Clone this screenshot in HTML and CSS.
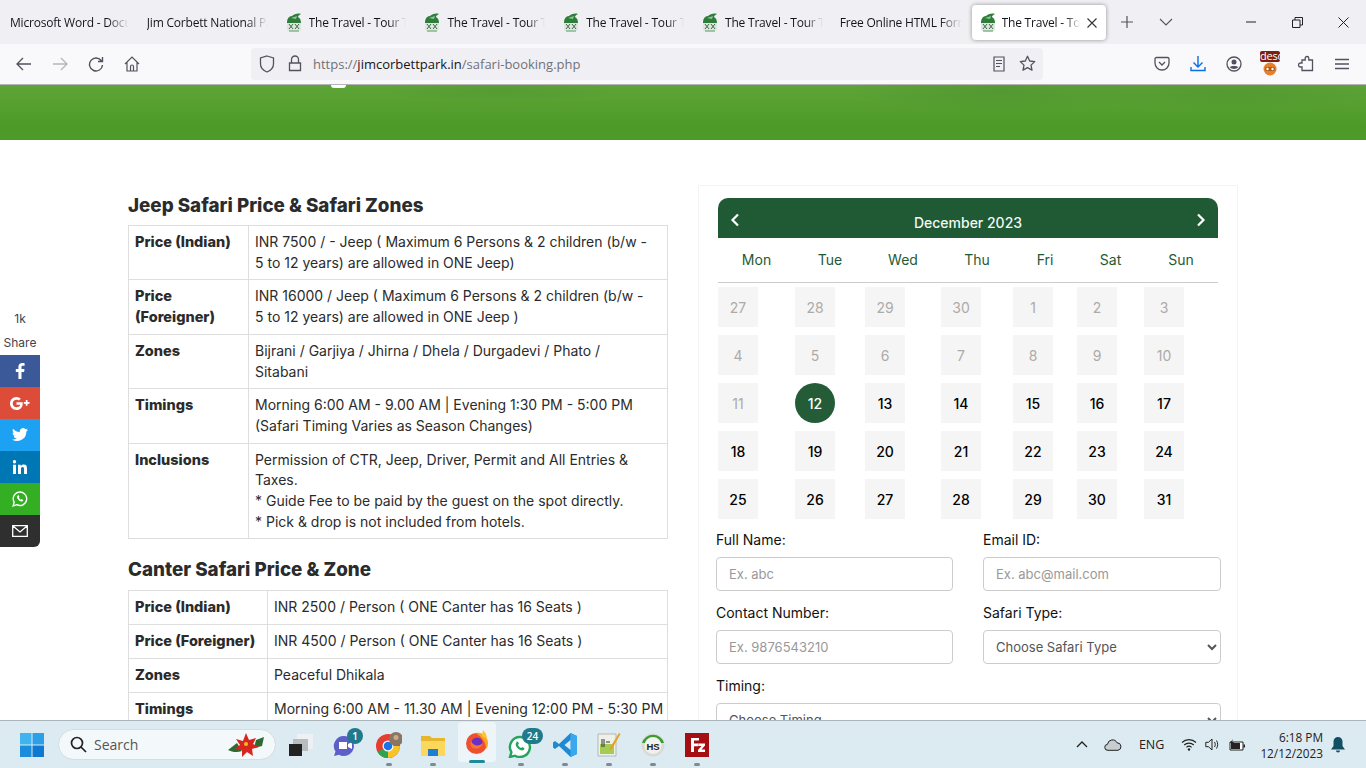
FILE: index.html
```html
<!DOCTYPE html>
<html lang="en">
<head>
<meta charset="utf-8">
<title>Safari Booking</title>
<link rel="stylesheet" href="styles.css">
</head>
<body>
<svg class="defs" width="0" height="0" aria-hidden="true">
  <symbol id="fav" viewBox="0 0 16 20">
    <path d="M1 10c0-3 1-7 5-7 2-2 6-3 9-2-2 1-3 2-3 3 2 1 3 3 3 6z" fill="#2f7d3a"/>
    <path d="M5 5l6-2-1 3z" fill="#8fc79a"/>
    <path d="M1 10h14v7c-2 2-12 2-14 0z" fill="#dfe4df"/>
    <path d="M3 11l4 5M7 11l-4 5M9 11l4 5M13 11l-4 5" stroke="#3c6a46" stroke-width="1" fill="none"/>
    <path d="M3 18h10" stroke="#7fb58a" stroke-width="1.4"/>
  </symbol>
</svg>

<header class="tabstrip">
  <div class="tab"><span class="tab-title">Microsoft Word - Document</span></div>
  <div class="tab"><span class="tab-title">Jim Corbett National Park</span></div>
  <div class="tab"><svg class="fav"><use href="#fav"/></svg><span class="tab-title">The Travel - Tour Travel</span></div>
  <div class="tab"><svg class="fav"><use href="#fav"/></svg><span class="tab-title">The Travel - Tour Travel</span></div>
  <div class="tab"><svg class="fav"><use href="#fav"/></svg><span class="tab-title">The Travel - Tour Travel</span></div>
  <div class="tab"><svg class="fav"><use href="#fav"/></svg><span class="tab-title">The Travel - Tour Travel</span></div>
  <div class="tab tab-plain"><span class="tab-title">Free Online HTML Form</span></div>
  <div class="tab tab-active"><svg class="fav"><use href="#fav"/></svg><span class="tab-title">The Travel - Tour Travel</span>
    <svg class="ic-close" width="12" height="12" viewBox="0 0 12 12"><path d="M1.500 1.500l9 9M10.500 1.500l-9 9" stroke="#333" stroke-width="1.100" fill="none"/></svg>
  </div>
  <button class="strip-btn strip-new"><svg width="14" height="14" viewBox="0 0 14 14"><path d="M7 1v12M1 7h12" stroke="#555" stroke-width="1.200"/></svg></button>
  <button class="strip-btn"><svg width="14" height="8" viewBox="0 0 14 8"><path d="M1 1l6 6 6-6" stroke="#555" stroke-width="1.100" fill="none"/></svg></button>
  <div class="winctl">
    <button class="win-btn"><svg width="10" height="2" viewBox="0 0 10 2"><path d="M0 1h10" stroke="#222"/></svg></button>
    <button class="win-btn"><svg width="11" height="11" viewBox="0 0 11 11"><path d="M.5 3h7.500v7.500H.5zM3 3V.5h7.500V8H8" stroke="#222" fill="none"/></svg></button>
    <button class="win-btn"><svg width="11" height="11" viewBox="0 0 11 11"><path d="M.5.500l10 10M10.500.500l-10 10" stroke="#222" fill="none"/></svg></button>
  </div>
</header>

<nav class="toolbar">
  <button class="tool"><svg width="16" height="14" viewBox="0 0 16 14"><path d="M7 1L1 7l6 6M1 7h14" stroke="#52525e" stroke-width="1.300" fill="none"/></svg></button>
  <button class="tool"><svg width="16" height="14" viewBox="0 0 16 14"><path d="M9 1l6 6-6 6M15 7H1" stroke="#b4b4ba" stroke-width="1.300" fill="none"/></svg></button>
  <button class="tool"><svg width="16" height="16" viewBox="0 0 16 16"><path d="M13.500 5A6.500 6.500 0 1 0 14.500 9M14.500 1v4.500H10" stroke="#52525e" stroke-width="1.400" fill="none"/></svg></button>
  <button class="tool"><svg width="16" height="16" viewBox="0 0 16 16"><path d="M1 8l7-7 7 7M3 6.500V15h10V6.500M6.500 15v-4.500a1.500 1.500 0 0 1 3 0V15" stroke="#52525e" stroke-width="1.200" fill="none"/></svg></button>
  <div class="urlbar">
    <svg class="url-shield" width="16" height="18" viewBox="0 0 16 18"><path d="M8 1l6.500 2v6c0 4-3 6.500-6.500 8-3.500-1.500-6.500-4-6.500-8V3z" stroke="#52525e" stroke-width="1.300" fill="none"/></svg>
    <svg class="url-lock" width="14" height="17" viewBox="0 0 14 17"><path d="M1.500 8h11v7.500h-11zM3.500 8V4.500a3.500 3.500 0 0 1 7 0V8" stroke="#52525e" stroke-width="1.300" fill="none"/></svg>
    <span class="url-text">https://<b>jimcorbettpark.in</b>/safari-booking.php</span>
    <svg class="url-reader" width="12" height="16" viewBox="0 0 12 16"><path d="M1 1h10v14H1zM3 4.500h6M3 7.500h6M3 10.500h4" stroke="#52525e" stroke-width="1.200" fill="none"/></svg>
    <svg class="url-star" width="17" height="17" viewBox="0 0 17 17"><path d="M8.500 1.300l2.200 4.700 5 .6-3.700 3.500 1 5-4.500-2.500-4.500 2.500 1-5L1.300 6.600l5-.6z" stroke="#52525e" stroke-width="1.300" fill="none" stroke-linejoin="round"/></svg>
  </div>
  <button class="tool tool-first"><svg width="16" height="16" viewBox="0 0 16 16"><path d="M1 3a1.500 1.500 0 0 1 1.500-1.500h11A1.500 1.500 0 0 1 15 3v4a7 7 0 0 1-14 0z" stroke="#52525e" stroke-width="1.300" fill="none"/><path d="M5 6l3 3 3-3" stroke="#52525e" stroke-width="1.300" fill="none"/></svg></button>
  <button class="tool"><svg width="16" height="17" viewBox="0 0 16 17"><path d="M8 1v11M3.500 7.500L8 12l4.500-4.500M1 12v3.500h14V12" stroke="#0a6ee6" stroke-width="1.400" fill="none"/></svg></button>
  <button class="tool"><svg width="16" height="16" viewBox="0 0 16 16"><circle cx="8" cy="8" r="7" stroke="#52525e" stroke-width="1.300" fill="none"/><circle cx="8" cy="6" r="2.500" fill="#52525e"/><path d="M3.500 11c2-1.500 7-1.500 9 0-2 2.500-7 2.500-9 0z" fill="#52525e"/></svg></button>
  <button class="tool tool-ext">
    <svg width="20" height="24" viewBox="0 0 20 24"><circle cx="10" cy="17" r="6.500" fill="#e8802a"/><rect x="5" y="15" width="10" height="4" rx="2" fill="#a85c1e"/><circle cx="7.500" cy="17" r="1.200" fill="#fff"/><circle cx="12.500" cy="17" r="1.200" fill="#fff"/></svg>
    <span class="ext-badge">deso</span>
  </button>
  <button class="tool"><svg width="16" height="17" viewBox="0 0 16 17"><path d="M9 1.500a1.800 1.800 0 0 1 1.800 1.800V5H14.500v10.500H4V12H2.500a2 2 0 0 1 0-4H4V5h3.200V3.300A1.800 1.800 0 0 1 9 1.500z" stroke="#52525e" stroke-width="1.300" fill="none"/></svg></button>
  <button class="tool"><svg width="14" height="12" viewBox="0 0 14 12"><path d="M0 1.500h14M0 6h14M0 10.500h14" stroke="#52525e" stroke-width="1.300"/></svg></button>
</nav>

<main class="page">
  <div class="banner"><span class="descender"></span></div>
  <div class="columns">
    <section class="prices">
      <h2 class="price-title">Jeep Safari Price &amp; Safari Zones</h2>
      <table class="price-table jeep">
        <tr><th>Price (Indian)</th><td>INR 7500 / - Jeep ( Maximum 6 Persons &amp; 2 children (b/w -<br>5 to 12 years) are allowed in ONE Jeep)</td></tr>
        <tr><th>Price (Foreigner)</th><td>INR 16000 / Jeep ( Maximum 6 Persons &amp; 2 children (b/w -<br>5 to 12 years) are allowed in ONE Jeep )</td></tr>
        <tr><th>Zones</th><td>Bijrani / Garjiya / Jhirna / Dhela / Durgadevi / Phato /<br>Sitabani</td></tr>
        <tr><th>Timings</th><td>Morning 6:00 AM - 9.00 AM | Evening 1:30 PM - 5:00 PM<br>(Safari Timing Varies as Season Changes)</td></tr>
        <tr><th>Inclusions</th><td>Permission of CTR, Jeep, Driver, Permit and All Entries &amp;<br>Taxes.<br>* Guide Fee to be paid by the guest on the spot directly.<br>* Pick &amp; drop is not included from hotels.</td></tr>
      </table>
      <h2 class="price-title second">Canter Safari Price &amp; Zone</h2>
      <table class="price-table canter">
        <tr><th>Price (Indian)</th><td>INR 2500 / Person ( ONE Canter has 16 Seats )</td></tr>
        <tr><th>Price (Foreigner)</th><td>INR 4500 / Person ( ONE Canter has 16 Seats )</td></tr>
        <tr><th>Zones</th><td>Peaceful Dhikala</td></tr>
        <tr><th>Timings</th><td>Morning 6:00 AM - 11.30 AM | Evening 12:00 PM - 5:30 PM</td></tr>
      </table>
    </section>

    <section class="booking">
      <div class="cal-head">
        <svg class="cal-arrow" width="10" height="14" viewBox="0 0 10 14"><path d="M8 1.500L2.500 7 8 12.500" stroke="#fff" stroke-width="2.200" fill="none"/></svg>
        <span class="cal-month">December 2023</span>
        <svg class="cal-arrow" width="10" height="14" viewBox="0 0 10 14"><path d="M2 1.500L7.500 7 2 12.500" stroke="#fff" stroke-width="2.200" fill="none"/></svg>
      </div>
      <div class="cal-grid cal-days">
        <span>Mon</span><span>Tue</span><span>Wed</span><span>Thu</span><span>Fri</span><span>Sat</span><span>Sun</span>
      </div>
      <div class="cal-grid cal-dates">
        <span class="off">27</span><span class="off">28</span><span class="off">29</span><span class="off">30</span><span class="off">1</span><span class="off">2</span><span class="off">3</span>
        <span class="off">4</span><span class="off">5</span><span class="off">6</span><span class="off">7</span><span class="off">8</span><span class="off">9</span><span class="off">10</span>
        <span class="off">11</span><span class="today">12</span><span>13</span><span>14</span><span>15</span><span>16</span><span>17</span>
        <span>18</span><span>19</span><span>20</span><span>21</span><span>22</span><span>23</span><span>24</span>
        <span>25</span><span>26</span><span>27</span><span>28</span><span>29</span><span>30</span><span>31</span>
      </div>
      <form class="form">
        <label class="field"><span>Full Name:</span><input type="text" placeholder="Ex. abc"></label>
        <label class="field"><span>Email ID:</span><input type="text" placeholder="Ex. abc@mail.com"></label>
        <label class="field"><span>Contact Number:</span><input type="text" placeholder="Ex. 9876543210"></label>
        <label class="field"><span>Safari Type:</span><select><option>Choose Safari Type</option></select></label>
        <label class="field field-wide"><span>Timing:</span><select><option>Choose Timing</option></select></label>
      </form>
    </section>
  </div>

  <aside class="share">
    <div class="share-count">1k</div>
    <div class="share-label">Share</div>
    <a class="sbtn fb"><svg width="10" height="16" viewBox="0 0 10 16"><path d="M6.500 16V9h2.600l.4-3H6.500V4.200c0-.9.300-1.400 1.500-1.400h1.600V.2C9.300.1 8.400 0 7.300 0 5 0 3.400 1.400 3.400 3.900V6H.8v3h2.600v7z" fill="#fff"/></svg></a>
    <a class="sbtn gp"><svg width="21" height="13" viewBox="0 0 21 13"><path d="M6.500 5.300v2.400h3.700C10 9 8.800 10.300 6.500 10.300 4.400 10.300 2.700 8.600 2.700 6.500S4.400 2.700 6.500 2.700c1.200 0 2 .5 2.400.9l1.900-1.800C9.600.7 8.200 0 6.500 0 2.900 0 0 2.900 0 6.500S2.900 13 6.500 13c3.800 0 6.200-2.600 6.200-6.300 0-.5 0-.9-.1-1.400z" fill="#fff"/><path d="M17.500 5V3h-1.700v2h-2v1.700h2v2h1.700v-2h2V5z" fill="#fff"/></svg></a>
    <a class="sbtn tw"><svg width="16" height="14" viewBox="0 0 16 14"><path d="M16 1.700c-.6.300-1.200.4-1.900.5.700-.4 1.200-1 1.400-1.800-.6.400-1.300.6-2.100.8A3.300 3.300 0 0 0 7.800 4.200C5.100 4.100 2.700 2.800 1.100.800.200 2.300.700 4.200 2.100 5.200c-.5 0-1-.2-1.500-.4 0 1.600 1.100 3 2.600 3.300-.5.100-1 .2-1.500.1.400 1.300 1.600 2.200 3.100 2.300A6.600 6.600 0 0 1 0 11.400 9.300 9.300 0 0 0 14.400 3.500c.6-.5 1.200-1.100 1.600-1.800z" fill="#fff"/></svg></a>
    <a class="sbtn li"><svg width="14" height="14" viewBox="0 0 14 14"><path d="M0 4.700h3V14H0zM1.500 0a1.700 1.700 0 1 1 0 3.400 1.700 1.700 0 0 1 0-3.400zM5 4.700h2.800V6c.5-.9 1.500-1.500 3-1.500 2.500 0 3.200 1.600 3.200 4V14h-3V9c0-1.300-.3-2-1.400-2-1.200 0-1.600.9-1.600 2v5H5z" fill="#fff"/></svg></a>
    <a class="sbtn wa"><svg width="16" height="16" viewBox="0 0 14 14"><path d="M1 13l.9-3.200A5.900 5.900 0 1 1 4.200 12z" stroke="#fff" stroke-width="1.200" fill="none"/><path d="M5 3.900c-1 .6-.9 2 .3 3.400 1.300 1.600 2.800 2.400 3.900 1.700.6-.4.700-.9.500-1.200l-1.300-.7-.6.600C7.200 7.400 6.400 6.600 6 5.700l.5-.7-.6-1.200c-.3-.1-.6-.1-.9.100z" fill="#fff"/></svg></a>
    <a class="sbtn em"><svg width="16" height="12" viewBox="0 0 16 12"><path d="M.7.700h14.600v10.600H.7zM1 1l7 6 7-6" stroke="#fff" stroke-width="1.300" fill="none"/></svg></a>
  </aside>
</main>

<footer class="taskbar">
  <button class="start"><svg width="24" height="24" viewBox="0 0 24 24"><path d="M0 0h11.500v11.500H0z" fill="#3fb4ee"/><path d="M12.500 0H24v11.500H12.500z" fill="#2ba0e8"/><path d="M0 12.500h11.500V24H0z" fill="#1b8ddc"/><path d="M12.500 12.500H24V24H12.500z" fill="#0f78d0"/></svg></button>
  <div class="search">
    <svg width="17" height="17" viewBox="0 0 17 17"><circle cx="7" cy="7" r="5.500" stroke="#222" stroke-width="1.700" fill="none"/><path d="M11 11l5 5" stroke="#222" stroke-width="1.700"/></svg>
    <span>Search</span>
    <svg class="poinsettia" width="36" height="26" viewBox="0 0 36 26"><path d="M0 18l9-7 5 8c-5 2-10 1-14-1zM36 5l-2 9-8 2 2-8z" fill="#2e6b34"/><path d="M18 1l3 7 7-2-3 6 6 3-7 2 1 7-6-4-5 5v-7l-7-1 5-4-4-6 7 2z" fill="#d8261f"/><circle cx="18" cy="12" r="2" fill="#f2c01e"/></svg>
  </div>
  <div class="apps">
    <div class="app"><svg width="24" height="22" viewBox="0 0 24 22"><path d="M8 0h16v15H8z" fill="#eef1f3"/><path d="M4 5h15v12H4z" fill="#b8bcbf"/><path d="M0 10h13v12H0z" fill="#222"/></svg></div>
    <div class="app"><svg width="26" height="24" viewBox="0 0 26 24"><path d="M12 3a10 10 0 1 1-5 18.700L2 23l1.500-4.500A10 10 0 0 1 12 3z" fill="#5b5fc7"/><path d="M7 9h8v7H7zM16 11l4-2v7l-4-2z" fill="#fff"/></svg><span class="badge">1</span></div>
    <div class="app app-on"><svg width="26" height="26" viewBox="0 0 26 26"><circle cx="12" cy="14" r="12" fill="#e53e30"/><path d="M12 14L1.600 20A12 12 0 0 0 12 26c2 0 3-.3 4-1z" fill="#2ea44f"/><path d="M12 14l12 0a12 12 0 0 1-12 12z" fill="#f7c325"/><circle cx="12" cy="14" r="5.500" fill="#fff"/><circle cx="12" cy="14" r="4.300" fill="#1a73e8"/><circle cx="20" cy="7" r="7" fill="#8a7462"/><circle cx="20" cy="5.500" r="2.500" fill="#c9a98c"/></svg></div>
    <div class="app app-on"><svg width="24" height="22" viewBox="0 0 24 22"><path d="M0 2h9l2 2h13v18H0z" fill="#e8b62c"/><path d="M0 7h24v15H0z" fill="#fbd75b"/><path d="M7 15h10v7H7z" fill="#1d7fd1"/></svg></div>
    <div class="app app-active"><svg width="24" height="24" viewBox="0 0 24 24"><circle cx="11.500" cy="13.500" r="10.500" fill="#f0502e"/><path d="M11 3c6-1 12 3 12 10 0 3-1 5-2 6 0-6-3-11-10-16z" fill="#fca326"/><path d="M18 0c3 3 4 6 4 9l-5-3z" fill="#fbc52f"/><circle cx="12" cy="13" r="5.500" fill="#6b2fc6"/><path d="M6 11c2 5 8 6 12 2-1 5-6 7-10 5-2-1-3-4-2-7z" fill="#f7772a"/></svg></div>
    <div class="app app-on"><svg width="26" height="26" viewBox="0 0 26 26"><path d="M12 5a10 10 0 1 1-5 18.700L2 25l1.400-4.800A10 10 0 0 1 12 5z" stroke="#24a55f" stroke-width="2.400" fill="#fff"/><path d="M8.500 10.500c-1.500 1-1 3.500 1 5.500 2 2.200 4.500 3 6 2 1-.7 1-1.500.7-2l-2-1-1 1c-1.500-.6-2.700-1.800-3.200-3.200l1-1-1-2c-.5-.3-1.500-.2-1.500-.3z" fill="#24a55f"/></svg><span class="badge badge-wide">24</span></div>
    <div class="app app-on"><svg width="24" height="24" viewBox="0 0 24 24"><path d="M17.500 0L24 3v18l-6.500 3L6 13l-4 3-2-1.500V9.500L2 8l4 3z" fill="#1f8ad2"/><path d="M17.500 0L24 3v18l-6.500 3z" fill="#3aa7ee"/><path d="M17.500 7l-6 5 6 5z" fill="#dbe9f0"/></svg></div>
    <div class="app app-on"><svg width="24" height="26" viewBox="0 0 24 26"><path d="M1 2h18v22H1z" fill="#eef1e8" stroke="#aaa" stroke-width=".8"/><path d="M3 12h14v10H3z" fill="#a4cc55"/><path d="M5 7v8M7 7v8M9 10h4" stroke="#333" stroke-width="1"/><path d="M22 1l1.500 1L15 17l-2.500 1.500L13 15.500z" fill="#e8a21d"/></svg></div>
    <div class="app app-on"><svg width="24" height="24" viewBox="0 0 24 24"><circle cx="12" cy="12" r="11.500" fill="#d9dcd6"/><path d="M1 10a11.500 11.500 0 0 1 22 0z" fill="#3e9a34"/><circle cx="12" cy="12.500" r="8.500" fill="#f2f2ec"/><text class="hs" x="12" y="16.500" text-anchor="middle">HS</text></svg></div>
    <div class="app app-on"><svg width="24" height="24" viewBox="0 0 24 24"><path d="M0 0h24v24H0z" fill="#a50e12"/><path d="M6 5h8v2.600H9v3h4.500v2.600H9V19H6z" fill="#fff"/><path d="M13.500 10.500H20v2l-3.500 4H20V19h-7v-2l3.500-4h-3z" fill="#fff"/></svg></div>
  </div>
  <div class="tray">
    <svg class="tray-chev" width="12" height="7" viewBox="0 0 12 7"><path d="M1 6l5-5 5 5" stroke="#222" stroke-width="1.300" fill="none"/></svg>
    <svg class="tray-cloud" width="18" height="12" viewBox="0 0 18 12"><path d="M4 11.300a3 3 0 0 1-.5-6A5 5 0 0 1 13 3.800a3.800 3.800 0 0 1 1 7.500z" fill="#c7cdd1" stroke="#222"/></svg>
    <span class="tray-lang">ENG</span>
    <svg class="tray-wifi" width="16" height="13" viewBox="0 0 16 13"><path d="M1 4.500a10 10 0 0 1 14 0M3.200 7a7 7 0 0 1 9.600 0M5.400 9.300a4 4 0 0 1 5.200 0" stroke="#222" stroke-width="1.100" fill="none"/><circle cx="8" cy="11.500" r="1.200" fill="#222"/></svg>
    <svg class="tray-vol" width="16" height="13" viewBox="0 0 16 13"><path d="M.8 4.300h2.700L7 1v11L3.500 8.700H.8z" stroke="#222" fill="none"/><path d="M9.500 4c1 1.500 1 3.500 0 5M11.500 2.500c1.600 2.500 1.600 5.500 0 8" stroke="#222" fill="none"/></svg>
    <svg class="tray-bat" width="16" height="12" viewBox="0 0 16 12"><path d="M1 3h13v8H1z" fill="#fff" stroke="#222"/><path d="M2 4h9v6H2z" fill="#222"/><path d="M14.500 5.500H16v3h-1.500z" fill="#222"/><path d="M4 0L1 4h2L2 7l3-4H3z" fill="#222"/></svg>
    <div class="clock"><div>6:18 PM</div><div>12/12/2023</div></div>
    <svg class="tray-bell" width="14" height="16" viewBox="0 0 14 16"><path d="M7 0a4.500 4.500 0 0 1 4.500 4.500V9L14 12.500H0L2.500 9V4.500A4.500 4.500 0 0 1 7 0zM5 13.500h4a2 2 0 0 1-4 0z" fill="#134f63"/></svg>
  </div>
</footer>
</body>
</html>
```

FILE: styles.css
```css
* { box-sizing: border-box; }
html, body { margin: 0; height: 100%; }
body {
  width: 1366px;
  height: 768px;
  overflow: hidden;
  display: flex;
  flex-direction: column;
  font-family: Inter, "Liberation Sans", sans-serif;
  color: #2b2b2b;
  background: #fff;
}
button { border: 0; background: none; padding: 0; font: inherit; }
.defs { position: absolute; }

/* browser tabs */
.tabstrip {
  flex: 0 0 44px;
  display: flex;
  background: #f0f0f4;
  font: 12px "Open Sans", sans-serif;
  letter-spacing: -.2px;
  color: #15141a;
}
.tab {
  flex: 0 0 138.8px;
  min-width: 0;
  height: 35px;
  margin-top: 5px;
  padding: 0 10px 0 8px;
  display: flex;
  align-items: center;
  gap: 7px;
}
.tab:first-child { padding-left: 10px; }
.tab-plain { padding-left: 7px; }
.tab-title {
  flex: 1;
  min-width: 0;
  white-space: nowrap;
  overflow: hidden;
  -webkit-mask-image: linear-gradient(90deg, #000 82%, transparent);
  mask-image: linear-gradient(90deg, #000 82%, transparent);
}
.fav { width: 16px; height: 20px; flex: none; }
.tab-active {
  flex: 0 0 134px;
  padding-right: 8px;
  background: #fff;
  border-radius: 4px;
  box-shadow: 0 0 4px rgba(0, 0, 0, .4);
  gap: 6px;
}
.ic-close { flex: none; }
.strip-btn { flex: 0 0 39px; height: 44px; display: flex; align-items: center; justify-content: center; }
.strip-new { margin-left: 2px; }
.winctl { margin-left: auto; display: flex; }
.win-btn { width: 46px; height: 44px; display: flex; align-items: center; justify-content: center; }

/* browser toolbar */
.toolbar {
  flex: 0 0 41px;
  display: flex;
  align-items: center;
  padding: 0 6px 1px;
  background: #f9f9fb;
  border-bottom: 1px solid #b4b4b8;
}
.tool { flex: 0 0 36px; height: 32px; display: flex; align-items: center; justify-content: center; position: relative; }
.tool-first { margin-left: 101px; }
.ext-badge {
  position: absolute;
  top: 3px;
  left: 8px;
  width: 20px;
  height: 11px;
  overflow: hidden;
  background: #7c1f10;
  border-radius: 2px;
  color: #fff;
  font: 11px/10px "Open Sans", sans-serif;
  letter-spacing: -.2px;
  text-align: left;
}
.urlbar {
  flex: 0 0 792px;
  height: 32px;
  margin-left: 101px;
  display: flex;
  align-items: center;
  background: #f0f0f4;
  border-radius: 4px;
  padding-left: 8px;
  font: 13px "Open Sans", sans-serif;
  color: #70707a;
}
.url-lock { margin-left: 13px; }
.url-text { margin-left: 11px; flex: 1; }
.url-text b { font-weight: 400; color: #15141a; }
.url-star { margin-left: 14px; margin-right: 7px; }

/* page */
.page { flex: 1; min-height: 0; position: relative; overflow: hidden; }
.banner {
  height: 55px;
  position: relative;
  background:
    radial-gradient(ellipse 150px 22px at 1000px 6px, rgba(40, 90, 30, .14), transparent),
    radial-gradient(ellipse 170px 20px at 1230px 6px, rgba(40, 90, 30, .12), transparent),
    radial-gradient(ellipse 120px 10px at 500px 6px, rgba(40, 90, 30, .1), transparent),
    linear-gradient(180deg, #5ea438 0%, #56a030 35%, #4d9a29 75%);
}
.descender {
  position: absolute;
  left: 331px;
  top: 0;
  width: 15px;
  height: 3px;
  background: #fff;
  border-radius: 0 0 8px 8px;
}
.columns {
  display: grid;
  grid-template-columns: 540px 540px;
  column-gap: 30px;
  padding-left: 128px;
  padding-top: 45px;
}
.prices { padding-top: 9px; }
.price-title { margin: 0 0 7px; font-size: 18.800px; line-height: 24px; font-weight: 800; color: #2b2b2b; }
.price-title.second { margin-top: 19px; margin-bottom: 8px; }
.price-table {
  width: 540px;
  border-collapse: collapse;
  table-layout: fixed;
  font-size: 14px;
  line-height: 20.700px;
}
.price-table th, .price-table td {
  border: 1px solid #dedede;
  padding: 6px;
  text-align: left;
  vertical-align: top;
  font-weight: 400;
  white-space: nowrap;
}
.price-table th { font-size: 14.500px; font-weight: 800; white-space: normal; }
.jeep th { width: 120px; }
.canter th { width: 139px; white-space: nowrap; }

/* calendar card */
.booking {
  height: 700px;
  border: 1px solid #f4f4f4;
  padding: 12px 20px 0 19px;
}
.cal-head {
  width: 500px;
  height: 40px;
  padding: 0 12px;
  display: flex;
  justify-content: space-between;
  background: #1f5a34;
  border-radius: 10px 10px 0 0;
}
.cal-arrow { margin-top: 15px; }
.cal-month { margin-top: 16px; color: #f1f8f3; font-size: 14px; line-height: 18px; font-weight: 500; }
.cal-grid {
  width: 500px;
  display: grid;
  grid-template-columns: 77px 70px 76px 72px 64px 67px 74px;
}
.cal-days {
  height: 45px;
  align-items: center;
  border-bottom: 1px solid #ccc;
  padding-bottom: 2px;
  text-align: center;
  font-size: 14px;
  color: #1f5a34;
}
.cal-dates { row-gap: 8px; padding-top: 4px; }
.cal-dates span {
  width: 40px;
  height: 40px;
  display: flex;
  align-items: center;
  justify-content: center;
  background: #f5f5f5;
  font-size: 14px;
  font-weight: 500;
  color: #000;
}
.cal-dates .off { color: #aeaaa8; font-weight: 400; }
.cal-dates .today { background: #245c37; border-radius: 50%; color: #fff; }

/* form */
.form {
  margin: 12px 0 0 -2px;
  width: 505px;
  display: grid;
  grid-template-columns: 237px 238px;
  column-gap: 30px;
  row-gap: 13px;
}
.field { display: block; font-size: 14px; line-height: 18px; color: #111; }
.field span { display: block; margin-bottom: 8px; }
.field-wide { grid-column: 1 / -1; }
.field input, .field select {
  display: block;
  width: 100%;
  height: 34px;
  border: 1px solid #ccc;
  border-radius: 4px;
  background: #fff;
  padding: 0 12px;
  font: 13px Inter, sans-serif;
  color: #555;
}
.field select { padding: 0 8px; }
.field input::placeholder { color: #999; opacity: 1; }

/* share bar */
.share { position: absolute; left: 0; top: 226px; width: 40px; text-align: center; }
.share-count { font-size: 12px; line-height: 16px; color: #2b4a5a; }
.share-label { margin-top: 8px; font-size: 12px; line-height: 16px; color: #444; margin-bottom: 4px; }
.sbtn { display: flex; width: 40px; height: 32px; align-items: center; justify-content: center; }
.fb { background: #3b5998; }
.gp { background: #dd4b39; }
.tw { background: #1da1f2; }
.li { background: #0077b5; }
.wa { background: #34af23; }
.em { background: #2f2f2f; border-radius: 0 0 6px 0; }

/* taskbar */
.taskbar {
  flex: 0 0 48px;
  display: flex;
  align-items: center;
  padding-left: 10px;
  border-top: 1px solid #a9b5bb;
  background: #dcebf2;
  font-family: "Open Sans", sans-serif;
}
.start { flex: 0 0 44px; height: 40px; display: flex; align-items: center; justify-content: center; }
.search {
  flex: 0 0 218px;
  height: 31px;
  margin-left: 4px;
  padding-left: 11px;
  display: flex;
  align-items: center;
  gap: 7px;
  background: #f3f8fa;
  border: 1px solid #d5dde1;
  border-radius: 16px;
  font-size: 14px;
  color: #555;
}
.poinsettia { margin-left: auto; margin-right: 11px; }
.apps { margin-left: 3px; display: flex; }
.app { flex: 0 0 44px; height: 46px; display: flex; align-items: center; justify-content: center; position: relative; }
.app-on::after, .app-active::after {
  content: "";
  position: absolute;
  bottom: 2px;
  left: 19px;
  width: 6px;
  height: 3px;
  border-radius: 2px;
  background: #808a90;
}
.app-active { width: 38px; flex-basis: 38px; margin: 0 3px; height: 40px; background: #eef5f8; border-radius: 4px; }
.app-active::after { left: 11px; bottom: -1px; width: 16px; background: #1f8a9a; }
.badge {
  position: absolute;
  top: 6px;
  left: 24px;
  width: 16px;
  height: 16px;
  border-radius: 50%;
  background: #217a8c;
  color: #fff;
  font-size: 10px;
  line-height: 16px;
  text-align: center;
  font-weight: 600;
}
.badge-wide { width: 21px; left: 23px; border-radius: 9px; }
.hs { font: 700 9.500px "Liberation Sans", sans-serif; fill: #222; }
.tray { margin-left: auto; display: flex; align-items: center; font-size: 12px; color: #222; }
.tray-chev { margin-right: 16px; }
.tray-cloud { margin-right: 17px; }
.tray-lang { margin-right: 17px; font-size: 12.500px; }
.tray-wifi { margin-right: 8px; }
.tray-vol { margin-right: 8px; }
.tray-bat { margin-right: 15px; }
.clock { text-align: right; line-height: 16px; font-size: 11.800px; }
.tray-bell { margin: 0 21px 0 8px; }
```
